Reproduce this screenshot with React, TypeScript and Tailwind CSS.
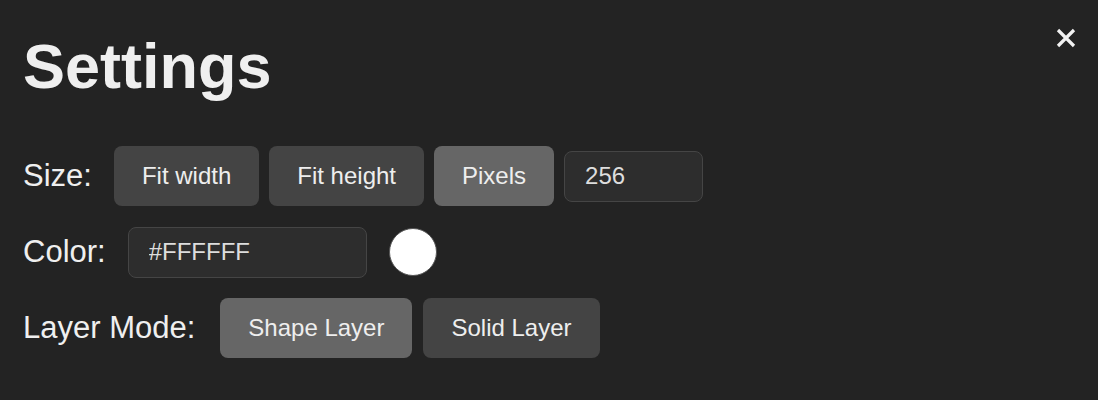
import { useState } from 'react';

const sizeModes = ['Fit width', 'Fit height', 'Pixels'];
const layerModes = ['Shape Layer', 'Solid Layer'];

function ToggleButton({ label, active, onClick }: { label: string; active: boolean; onClick: () => void }) {
  return (
    <button
      onClick={onClick}
      className={`h-[60px] px-[28px] rounded-lg text-[24px] text-[#eeeeee] ${active ? 'bg-[#666666]' : 'bg-[#444444]'}`}
    >
      {label}
    </button>
  );
}

export default function App() {
  const [sizeMode, setSizeMode] = useState('Pixels');
  const [layerMode, setLayerMode] = useState('Shape Layer');
  const [pixels, setPixels] = useState('256');
  const [color, setColor] = useState('#FFFFFF');

  return (
    <div className="relative h-[400px] w-full bg-[#232323] pl-[23px] pt-[35px] font-['Liberation_Sans',Arial,sans-serif] text-[#efefef]">
      {/* Close */}
      <button className="absolute right-[22px] top-[28px] w-[20px] h-[20px] flex items-center justify-center" aria-label="Close">
        <svg width="20" height="20" viewBox="0 0 20 20">
          <path d="M2 2 L18 18 M18 2 L2 18" stroke="#f2f2f2" strokeWidth="3.2" strokeLinecap="butt" />
        </svg>
      </button>

      <h1 className="text-[63px] leading-none font-bold">Settings</h1>

      <div className="mt-[48px] flex flex-col gap-4">
        {/* Size */}
        <div className="flex items-center h-[60px]">
          <span className="text-[31px] mr-[22px]">Size:</span>
          <div className="flex items-center gap-[10px]">
            {sizeModes.map((m) => (
              <ToggleButton key={m} label={m} active={sizeMode === m} onClick={() => setSizeMode(m)} />
            ))}
            <input
              value={pixels}
              onChange={(e) => setPixels(e.target.value)}
              className="w-[139px] h-[51px] rounded-lg bg-[#2d2d2d] border border-[#454545] px-[20px] text-[24px] text-[#dddddd] outline-none"
            />
          </div>
        </div>

        {/* Color */}
        <div className="flex items-center h-[60px]">
          <span className="text-[31px] mr-[22px]">Color:</span>
          <input
            value={color}
            onChange={(e) => setColor(e.target.value)}
            className="w-[239px] h-[51px] rounded-lg bg-[#2d2d2d] border border-[#454545] px-[20px] text-[24px] text-[#dddddd] outline-none"
          />
          <div className="ml-[22px] w-[48px] h-[48px] rounded-full bg-white border border-[#555555]" />
        </div>

        {/* Layer mode */}
        <div className="flex items-center h-[60px]">
          <span className="text-[31px] mr-[25px]">Layer Mode:</span>
          <div className="flex items-center gap-[11px]">
            {layerModes.map((m) => (
              <ToggleButton key={m} label={m} active={layerMode === m} onClick={() => setLayerMode(m)} />
            ))}
          </div>
        </div>
      </div>
    </div>
  );
}
